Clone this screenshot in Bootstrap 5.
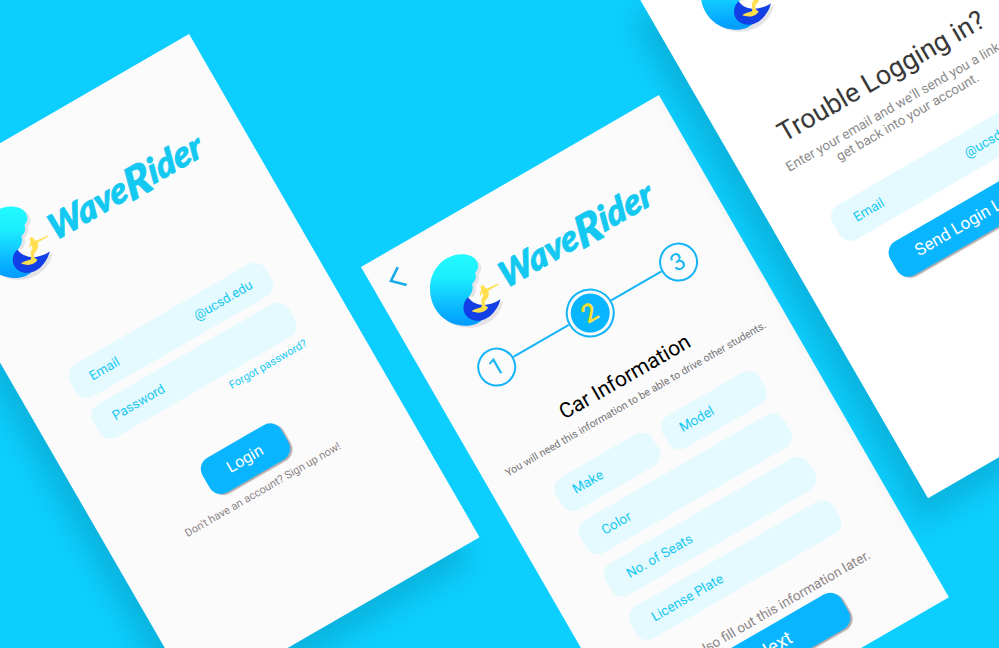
<!DOCTYPE html>
<html lang="en">
<head>
<meta charset="utf-8">
<meta name="viewport" content="width=device-width, initial-scale=1">
<title>WaveRider</title>
<link href="https://cdn.jsdelivr.net/npm/bootstrap@5.3.0/dist/css/bootstrap.min.css" rel="stylesheet">
<style>
body{background:#0ccfff;font-family:Roboto,"Liberation Sans",sans-serif;line-height:1.15}
.stage{width:999px;height:648px}
/* phone screens scattered on the canvas */
.screen{position:absolute;height:581px;transform-origin:0 0;transform:rotate(-30deg);background:#fbfbfc;white-space:nowrap}
.lifted{box-shadow:-19px 19px 26px rgba(0,0,0,.13)}
.screen-login{left:-95.5px;top:197.5px;width:328px}
.screen-car{left:360.5px;top:266.5px;width:344px;height:579.5px}
.screen-help{left:638px;top:-4.5px;width:344px;height:580px;background:#fff}
.brand-defs{position:absolute;width:0;height:0}
.brand-logo{width:264px;height:80px;overflow:visible;flex:none}
.brand-text{font-family:Lato,sans-serif;font-weight:900;font-style:italic;font-size:35px;fill:#14c9f1;stroke:#14c9f1;stroke-width:.9;stroke-linejoin:round}
.screen-login .brand-logo{margin:51px 0 0 34px}
.screen-car .brand-logo{margin-top:30px}
.screen-help .brand-logo{margin:4.5px 0 0 47px}
.back{width:40px;height:50px;flex:none}
.field{height:37.5px;border-radius:13px;background:#e5faff;color:#17c8f2;font-size:13.5px;padding:0 22px}
.field.half{width:111.6px;padding:0 17.5px}
.cta{height:40px;border-radius:13px;background:#09b5ff;color:#fff;font-size:17px;box-shadow:1.5px 2px 1px #b3acad;padding:0;border:0;line-height:1}
.note{color:#8b8485}
.tiny{font-size:11px;line-height:14px}
.w-login{width:226px}
.w-car{width:236px}
.w-help{width:235px}
.login-fields{margin-top:97.5px;gap:9px}
.login-fields .field{font-size:13.2px;padding:0 20px}
.forgot{color:#17c8f2;margin:6.5px 53px 0 0}
.login-btn{width:91px;margin-top:43px;font-size:16px}
.signup{margin-top:9px}
.step{width:39px;height:39px;border:2px solid #14b4f8;color:#16b6f2;font-size:24px;font-weight:400;line-height:1}
.step-on{width:49px;height:49px;border:2px solid #14b4f8;padding:3px}
.step-on span{background:#09b5ff;color:#ffe02e;font-size:26px;font-weight:500;line-height:1}
.steps{margin-top:19.5px;padding-left:48px}
.rail{height:2.5px;width:63.5px;background:#14b4f8}
.rail-b{width:58px}
.car-title{font-size:21.2px;line-height:26px;color:#000;margin:35.5px 0 0 3px}
.car-sub{margin-top:4.5px;color:#757575;font-size:10.6px}
.car-fields{margin-top:23px;padding-left:1px;gap:12.2px}
.later{font-size:13.6px;line-height:16px;margin:26px 0 0 -1px}
.next-btn{width:154px;margin:4.5px 0 0 2px;padding-right:10px;font-size:19px}
.help-title{font-size:26.9px;line-height:32px;color:#383838;margin:90.5px 0 0 -3px}
.help-sub{font-size:13.5px;line-height:16px;color:#8a8a8a;margin-top:7.5px;text-align:center;padding-left:2px}
.help-field{margin-top:34.5px;height:38.5px;font-size:13.3px;padding:0 19px 0 22px}
.send-btn{width:172px;margin:21.5px 0 0 2px;height:39px;font-size:17px}
</style>
</head>
<body class="m-0 overflow-hidden">
<svg class="brand-defs" aria-hidden="true">
  <defs>
    <linearGradient id="sea" x1="0" y1="0" x2="0" y2="1"><stop offset="0" stop-color="#22faff"/><stop offset=".32" stop-color="#1ceeff"/><stop offset="1" stop-color="#0099ff"/></linearGradient>
    <symbol id="logo" viewBox="40 30 264 80" overflow="visible">
      <g transform="rotate(30) translate(59.5 -27.2)">
        <path transform="translate(2.8 2)" fill="#e4e4e7" d="M44 14.5C49 14 57 19 58 26C58 29 57 31 55 33C57 37 55 41 52 44C54 49 51 54 48 58C53 64 70 68 80 59C77 76 62 86 45 86C25 86 9.5 70 9.5 49C9.5 30 26 15 44 14.5Z"/>
        <path fill="#fbfbfc" d="M50 57L48 58C53 64 70 68 80 59L70 57Z"/>
        <path fill="url(#sea)" d="M40 14.5C49 14 56.5 18 57.5 25C58 29 56.5 31 54.5 33C56.5 37 55 41 51.5 44C53.5 49 51 54 47.5 58L62 80C57 84.5 51 86 45 86C25 86 9.5 70 9.5 49C9.5 30 23 15.5 40 14.5Z"/>
        <path fill="#123fe6" d="M47.5 57.5C54 67 68 67.5 80 59.5C77 71 68 81 57 81C48 81 42.5 74 43 67.5C43 63 45 60 47.5 57.5Z"/>
        <path fill="#ffdf4d" d="M60 46.2C61.5 44.5 64.5 45.5 64.5 48L66.5 48.8L78.2 43.6L78.3 44.6L68 50.6C68.5 54 68.5 56.5 66.5 59L64 62L65 66L67.5 67.5C67 70.5 62 73 57.5 72.9L51.5 71.8C52 69.8 56 69 61 67.5L61.2 65L60.8 60L62.8 56L61 52.5L59.8 57L59.3 54L60.8 50Z"/>
      </g>
      <text class="brand-text" transform="translate(114 91.5) skewX(-8)" x="0" y="0" textLength="173" lengthAdjust="spacingAndGlyphs">Wave<tspan font-size="43" dy="4">R</tspan><tspan dy="-4">ider</tspan></text>
    </symbol>
  </defs>
</svg>
<main class="stage position-relative overflow-hidden">

  <section class="screen screen-login lifted d-flex flex-column align-items-center">
    <svg class="brand-logo align-self-start"><use href="#logo"/></svg>
    <div class="login-fields w-login d-flex flex-column">
      <div class="field d-flex align-items-center justify-content-between"><span>Email</span><span>@ucsd.edu</span></div>
      <div class="field d-flex align-items-center"><span>Password</span></div>
    </div>
    <div class="forgot tiny align-self-end">Forgot password?</div>
    <button class="btn cta login-btn">Login</button>
    <div class="note tiny signup">Don't have an account? Sign up now!</div>
  </section>

  <section class="screen screen-car d-flex flex-column align-items-center">
    <header class="d-flex align-self-start">
      <svg class="back" viewBox="0 0 40 50" fill="none" stroke="#17abe8" stroke-width="2.6"><path d="M31.8 18.5L19 27L30.5 38.5"/></svg>
      <svg class="brand-logo"><use href="#logo"/></svg>
    </header>
    <div class="steps d-flex align-items-center align-self-start">
      <div class="step rounded-circle d-flex align-items-center justify-content-center">1</div>
      <div class="rail"></div>
      <div class="step-on rounded-circle d-flex"><span class="rounded-circle flex-fill d-flex align-items-center justify-content-center">2</span></div>
      <div class="rail rail-b"></div>
      <div class="step rounded-circle d-flex align-items-center justify-content-center">3</div>
    </div>
    <h1 class="car-title fw-normal">Car Information</h1>
    <div class="tiny car-sub">You will need this information to be able to drive other students.</div>
    <div class="car-fields w-car d-flex flex-column">
      <div class="d-flex justify-content-between">
        <div class="field half d-flex align-items-center">Make</div>
        <div class="field half d-flex align-items-center">Model</div>
      </div>
      <div class="field d-flex align-items-center">Color</div>
      <div class="field d-flex align-items-center">No. of Seats</div>
      <div class="field d-flex align-items-center">License Plate</div>
    </div>
    <div class="note later">You can also fill out this information later.</div>
    <button class="btn cta next-btn">Next</button>
  </section>

  <section class="screen screen-help lifted d-flex flex-column align-items-center">
    <svg class="brand-logo align-self-start"><use href="#logo"/></svg>
    <h1 class="help-title fw-normal">Trouble Logging in?</h1>
    <div class="help-sub">Enter your email and we'll send you a link to<br>get back into your account.</div>
    <div class="field help-field w-help d-flex align-items-center justify-content-between"><span>Email</span><span>@ucsd.edu</span></div>
    <button class="btn cta send-btn">Send Login Link</button>
  </section>

</main>
<script src="https://cdn.jsdelivr.net/npm/bootstrap@5.3.0/dist/js/bootstrap.bundle.min.js"></script>
</body>
</html>
